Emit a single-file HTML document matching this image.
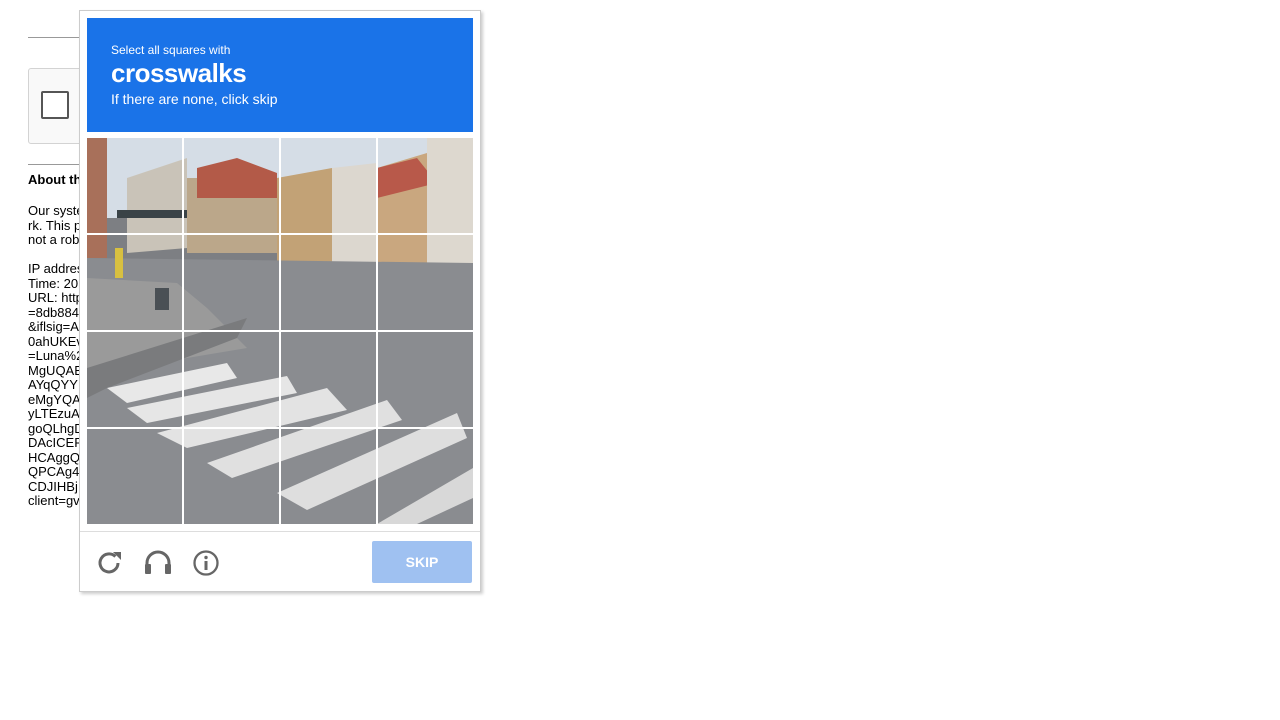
<!DOCTYPE html>
<html><head><style>
body{margin:0;width:1280px;height:720px;background:#fff;font-family:"Liberation Sans",Arial,sans-serif;position:relative;overflow:hidden}
.t{position:absolute;left:28px;font-size:13px;line-height:14.5px;color:#000}
</style></head><body>
<div style="position:absolute;left:28px;top:37px;width:60px;height:1px;background:#999"></div>
<div style="position:absolute;left:28px;top:68px;width:60px;height:74px;background:#f9f9f9;border:1px solid #d3d3d3;border-radius:3px"></div>
<div style="position:absolute;left:41px;top:91px;width:24px;height:24px;border:2px solid #555;border-radius:2px;background:#fff"></div>
<div style="position:absolute;left:28px;top:164px;width:60px;height:1px;background:#999"></div>
<div class="t" style="top:173px;font-weight:bold">About th</div>
<div class="t" style="top:204px">Our syste<br>rk. This p<br>not a rob<br><br>IP addres<br>Time: 20<br>URL: http<br>=8db884<br>&amp;iflsig=A<br>0ahUKEv<br>=Luna%2<br>MgUQAB<br>AYqQYY<br>eMgYQA<br>yLTEzuA<br>goQLhgD<br>DAcICEF<br>HCAggQ<br>QPCAg4<br>CDJIHBj<br>client=gv</div>
<div style="position:absolute;left:79px;top:10px;width:400px;height:580px;background:#fff;border:1px solid #ccc;box-shadow:2px 2px 3px rgba(0,0,0,.2)"></div>
<div style="position:absolute;left:87px;top:18px;width:386px;height:114px;background:#1a73e8;color:#fff">
<div style="position:absolute;left:24px;top:25px;font-size:12px">Select all squares with</div>
<div style="position:absolute;left:24px;top:40px;font-size:26px;font-weight:bold;letter-spacing:-0.5px">crosswalks</div>
<div style="position:absolute;left:24px;top:73px;font-size:14px">If there are none, click skip</div>
</div>
<svg style="position:absolute;left:87px;top:138px" width="386" height="386" viewBox="0 0 386 386">
<rect width="386" height="386" fill="#7d7f83"/>
<rect width="386" height="80" fill="#d5dde6"/>
<polygon points="0,0 20,0 20,120 0,120" fill="#a8705a"/>
<polygon points="40,40 100,20 100,110 40,115" fill="#c9c3b8"/>
<polygon points="100,40 190,40 190,115 100,115" fill="#bba78a"/>
<polygon points="110,30 150,20 190,35 190,60 110,60" fill="#b35a48"/>
<polygon points="190,40 245,30 245,125 190,125" fill="#c2a276"/>
<polygon points="245,30 290,25 290,125 245,125" fill="#dcd7cf"/>
<polygon points="290,30 340,15 340,130 290,130" fill="#c9a77f"/>
<polygon points="290,30 330,20 350,45 290,60" fill="#b8594a"/>
<polygon points="340,0 386,0 386,135 340,135" fill="#ddd8cf"/>
<rect x="30" y="72" width="70" height="8" fill="#3a4347"/>
<polygon points="0,120 386,125 386,386 0,386" fill="#8a8c90"/>
<polygon points="0,140 90,145 120,170 160,210 40,230 0,240" fill="#9a9a9a"/>
<polygon points="0,230 160,180 150,200 20,250 0,260" fill="#7a7b7d"/>
<polygon points="20,250 140,225 150,240 40,265" fill="#e8e8e8"/>
<polygon points="40,270 200,238 210,255 60,285" fill="#e6e6e6"/>
<polygon points="70,295 240,250 260,272 100,310" fill="#e3e3e3"/>
<polygon points="120,325 300,262 315,282 145,340" fill="#e0e0e0"/>
<polygon points="190,355 370,275 380,300 220,372" fill="#dedede"/>
<polygon points="290,386 386,330 386,360 330,386" fill="#d8d8d8"/>
<rect x="68" y="150" width="14" height="22" fill="#4a5055"/>
<rect x="28" y="110" width="8" height="30" fill="#d8c040"/>
<g fill="#fff"><rect x="95" y="0" width="2" height="386"/><rect x="192" y="0" width="2" height="386"/><rect x="289" y="0" width="2" height="386"/>
<rect x="0" y="95" width="386" height="2"/><rect x="0" y="192" width="386" height="2"/><rect x="0" y="289" width="386" height="2"/></g>
</svg>
<div style="position:absolute;left:80px;top:531px;width:400px;height:1px;background:#ddd"></div>
<svg style="position:absolute;left:96px;top:548px" width="130" height="30" viewBox="0 0 130 30">
<path d="M22 15a9 9 0 1 1-2.6-6.4" fill="none" stroke="#666" stroke-width="3"/>
<polygon points="17,4 25,4 25,12" fill="#666"/>
<path d="M51 22v-7a11 11 0 0 1 22 0v7" fill="none" stroke="#666" stroke-width="3"/>
<rect x="49" y="16" width="6" height="10" rx="1" fill="#666"/><rect x="69" y="16" width="6" height="10" rx="1" fill="#666"/>
<circle cx="110" cy="15" r="11.5" fill="none" stroke="#666" stroke-width="2.3"/>
<circle cx="110" cy="9.5" r="1.7" fill="#666"/><rect x="108.5" y="13" width="3" height="9" fill="#666"/>
</svg>
<div style="position:absolute;left:372px;top:541px;width:100px;height:42px;background:#9fc1f1;border-radius:2px;color:#fff;font-weight:bold;font-size:14px;line-height:42px;text-align:center">SKIP</div>
</body></html>
